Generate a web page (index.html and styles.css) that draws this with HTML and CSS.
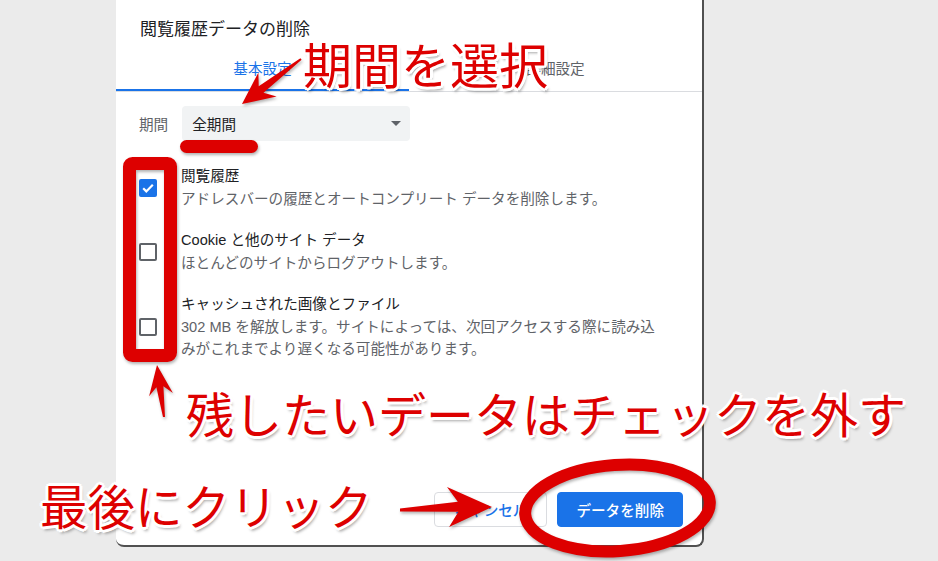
FILE: index.html
```html
<!DOCTYPE html>
<html lang="ja">
<head>
    <meta charset="UTF-8">
    <meta name="viewport" content="width=device-width, initial-scale=1.0">
    <title>閲覧履歴データの削除</title>
    <link rel="stylesheet" href="styles.css">
</head>
<body>
    <div class="stage">
        <div class="dialog">
            <h1 class="dialog-title">閲覧履歴データの削除</h1>
            <div class="tabs">
                <div class="tab active">基本設定</div>
                <div class="tab">詳細設定</div>
            </div>
            <div class="period-row">
                <span class="period-label">期間</span>
                <div class="select">
                    <span>全期間</span>
                    <span class="select-arrow"></span>
                </div>
            </div>
            <ul class="items">
                <li class="item">
                    <span class="checkbox checked">
                        <svg width="18" height="18" viewBox="0 0 18 18"><path d="M4.2 9.3l3.1 3.1 6.5-6.6" fill="none" stroke="#fff" stroke-width="2.2"/></svg>
                    </span>
                    <div class="item-text">
                        <div class="item-title">閲覧履歴</div>
                        <div class="item-desc">アドレスバーの履歴とオートコンプリート データを削除します。</div>
                    </div>
                </li>
                <li class="item">
                    <span class="checkbox"></span>
                    <div class="item-text">
                        <div class="item-title">Cookie と他のサイト データ</div>
                        <div class="item-desc">ほとんどのサイトからログアウトします。</div>
                    </div>
                </li>
                <li class="item">
                    <span class="checkbox"></span>
                    <div class="item-text">
                        <div class="item-title">キャッシュされた画像とファイル</div>
                        <div class="item-desc">302 MB を解放します。サイトによっては、次回アクセスする際に読み込みがこれまでより遅くなる可能性があります。</div>
                    </div>
                </li>
            </ul>
            <div class="actions">
                <button class="btn btn-cancel">キャンセル</button>
                <button class="btn btn-primary">データを削除</button>
            </div>
        </div>

        <!-- annotations drawn over the screenshot -->
        <svg class="marks" width="938" height="561" viewBox="0 0 938 561">
            <g fill="#dd0000">
                <polygon points="301.6,59.8 263.5,92.7 276.6,96.6 242,104 258.4,72.6 258.7,86.3 300.4,58.2"/>
                <rect x="180" y="140" width="78" height="13" rx="6.5"/>
                <polygon points="165,416.9 163.4,386.3 172.9,393.1 157,365 149.1,396.3 156.4,387.3 163,417.1"/>
                <polygon points="400,511.5 458.4,511.8 449.1,527 492,507 447,487 457.8,501.8 400,508.5"/>
            </g>
            <rect x="129.5" y="163.5" width="41" height="192" rx="3" fill="none" stroke="#dd0000" stroke-width="13"/>
            <ellipse cx="617.5" cy="508" rx="92.5" ry="43" fill="none" stroke="#dd0000" stroke-width="12" transform="rotate(-4 617.5 508)"/>
        </svg>
        <div class="note note-period">期間を選択</div>
        <div class="note note-keep">残したいデータはチェックを外す</div>
        <div class="note note-last">最後にクリック</div>
    </div>
</body>
</html>
```

FILE: styles.css
```css
body {
    margin: 0;
    background: #ebebeb;
    font-family: "Liberation Sans", "Noto Sans CJK JP", sans-serif;
}
.stage {
    position: relative;
    width: 938px;
    height: 561px;
    overflow: hidden;
}
.dialog {
    box-sizing: border-box;
    width: 588px;
    height: 547px;
    margin-left: 116px;
    background: #fff;
    border-right: 2px solid #505050;
    border-bottom: 2px solid #505050;
    border-radius: 0 0 8px 8px;
    display: flex;
    flex-direction: column;
}
.dialog-title {
    margin: 0;
    padding: 18px 24px 0;
    font-size: 17px;
    line-height: 24px;
    font-weight: normal;
    color: #202124;
}
.tabs {
    display: flex;
    border-bottom: 1px solid #dadce0;
}
.tab {
    flex: 1;
    height: 49px;
    padding-top: 4px;
    box-sizing: border-box;
    display: flex;
    align-items: center;
    justify-content: center;
    font-size: 14.6px;
    color: #5f6368;
    border-bottom: 2px solid transparent;
}
.tab.active {
    color: #1a73e8;
    border-bottom-color: #1a73e8;
}
.period-row {
    display: flex;
    align-items: center;
    gap: 14px;
    margin-top: 14px;
    padding-left: 23px;
}
.period-label {
    font-size: 14.6px;
    color: #5f6368;
}
.select {
    box-sizing: border-box;
    width: 228px;
    height: 35px;
    padding: 0 9px 0 10px;
    display: flex;
    align-items: center;
    justify-content: space-between;
    background: #f1f3f4;
    border-radius: 4px;
    font-size: 14.6px;
    color: #202124;
}
.select-arrow {
    width: 0;
    height: 0;
    border-left: 5px solid transparent;
    border-right: 5px solid transparent;
    border-top: 5px solid #5f6368;
}
.items {
    list-style: none;
    margin: 24px 0 0;
    padding: 0 0 0 23px;
    display: flex;
    flex-direction: column;
    gap: 19px;
}
.item {
    display: flex;
    align-items: center;
    gap: 24px;
}
.checkbox {
    box-sizing: border-box;
    width: 18px;
    height: 18px;
    border: 2px solid #5f6368;
    border-radius: 2px;
    flex-shrink: 0;
    display: flex;
    align-items: center;
    justify-content: center;
}
.checkbox.checked {
    background: #1a73e8;
    border-color: #1a73e8;
}
.checkbox svg {
    flex-shrink: 0;
}
.item-text {
    width: 486px;
    font-size: 14.6px;
    line-height: 22.5px;
}
.item-title {
    color: #202124;
}
.item-desc {
    color: #5f6368;
}
.actions {
    margin-top: auto;
    display: flex;
    justify-content: flex-end;
    gap: 10px;
    padding: 0 19px 18px 0;
}
.btn {
    height: 35px;
    padding: 0 19px;
    border-radius: 4px;
    font-family: inherit;
    font-size: 14.6px;
    font-weight: 500;
    cursor: pointer;
}
.btn-cancel {
    background: #fff;
    color: #1a73e8;
    border: 1px solid #dadce0;
}
.btn-primary {
    padding: 0 18px;
    background: #1a73e8;
    color: #fff;
    border: 1px solid #1a73e8;
}
.marks {
    position: absolute;
    left: 0;
    top: 0;
    filter: drop-shadow(1px 2px 1.5px rgba(0,0,0,0.3));
}
.note {
    position: absolute;
    line-height: 1;
    white-space: nowrap;
    color: #dd0000;
    font-family: "Noto Sans CJK JP", sans-serif;
    font-weight: 400;
    text-shadow:
        3px 0 0 #fff, -3px 0 0 #fff, 0 3px 0 #fff, 0 -3px 0 #fff,
        2px 2px 0 #fff, -2px 2px 0 #fff, 2px -2px 0 #fff, -2px -2px 0 #fff,
        2px 4px 3px rgba(0,0,0,0.35);
}
.note-period {
    left: 303px;
    top: 38px;
    font-size: 49px;
}
.note-keep {
    left: 186px;
    top: 388px;
    font-size: 48px;
}
.note-last {
    left: 40px;
    top: 481px;
    font-size: 47.5px;
}
```
